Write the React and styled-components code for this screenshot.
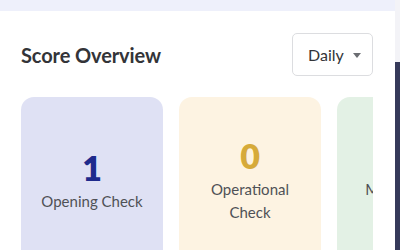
import React from "react";
import styled, { createGlobalStyle } from "styled-components";

const GlobalStyle = createGlobalStyle`
  html, body {
    margin: 0;
    padding: 0;
    background: #ffffff;
    font-family: "Lato", "Noto Sans", sans-serif;
  }
  * {
    box-sizing: border-box;
  }
`;

const Page = styled.div`
  display: flex;
  width: 400px;
  height: 250px;
  overflow: hidden;
`;

const Main = styled.div`
  width: 395px;
  display: flex;
  flex-direction: column;
`;

const TopStrip = styled.div`
  height: 11px;
  background: #eef0fb;
`;

const Panel = styled.div`
  flex: 1;
  background: #ffffff;
  padding: 22px 22px 0 21px;
  overflow: hidden;
`;

const Header = styled.div`
  display: flex;
  align-items: center;
  justify-content: space-between;
  height: 43px;
`;

const Title = styled.h2`
  margin: 0;
  font-size: 20px;
  font-weight: 700;
  letter-spacing: -0.1px;
  color: #333438;
`;

const Select = styled.button`
  display: flex;
  align-items: center;
  gap: 9px;
  height: 43px;
  width: 81px;
  padding: 0 0 0 15px;
  border: 1px solid #dcdde0;
  border-radius: 5px;
  background: #ffffff;
  font-family: inherit;
  font-size: 16px;
  color: #333438;
`;

const Caret = styled.span`
  width: 0;
  height: 0;
  border-left: 4.5px solid transparent;
  border-right: 4.5px solid transparent;
  border-top: 5px solid #6b6d72;
  margin-top: 1px;
`;

const SideBar = styled.div`
  width: 5px;
  display: flex;
  flex-direction: column;
`;

const SideTop = styled.div`
  height: 62px;
  background: #f3f3f7;
`;

const SideBottom = styled.div`
  flex: 1;
  background: #363a5a;
`;

const CardRow = styled.div`
  display: flex;
  gap: 16px;
  margin-top: 21px;
  width: 352px;
  overflow: hidden;
`;

const Card = styled.div`
  flex: 0 0 142px;
  height: 166px;
  border-radius: 13px;
  background: ${props => props.bg};
  display: flex;
  flex-direction: column;
  align-items: center;
  justify-content: center;
  text-align: center;
`;

const Count = styled.div`
  font-size: 34px;
  font-weight: 800;
  line-height: 40px;
  color: ${props => props.color};
`;

const Label = styled.div`
  font-size: 15px;
  line-height: 23px;
  color: #4f5156;
  margin-top: 2px;
  max-width: 110px;
`;

const cards = [
  { count: 1, label: "Opening Check", bg: "#dfe1f4", color: "#1e2a8c" },
  { count: 0, label: "Operational Check", bg: "#fdf3e2", color: "#d6aa3a" },
  { count: 0, label: "Maintenance Check", bg: "#e3f1e5", color: "#3c9a52" }
];

const App = () => (
  <>
    <GlobalStyle />
    <Page>
      <Main>
        <TopStrip />
        <Panel>
          <Header>
            <Title>Score Overview</Title>
            <Select>
              Daily
              <Caret />
            </Select>
          </Header>
          <CardRow>
            {cards.map(card => (
              <Card key={card.label} bg={card.bg}>
                <Count color={card.color}>{card.count}</Count>
                <Label>{card.label}</Label>
              </Card>
            ))}
          </CardRow>
        </Panel>
      </Main>
      <SideBar>
        <SideTop />
        <SideBottom />
      </SideBar>
    </Page>
  </>
);

export default App;
